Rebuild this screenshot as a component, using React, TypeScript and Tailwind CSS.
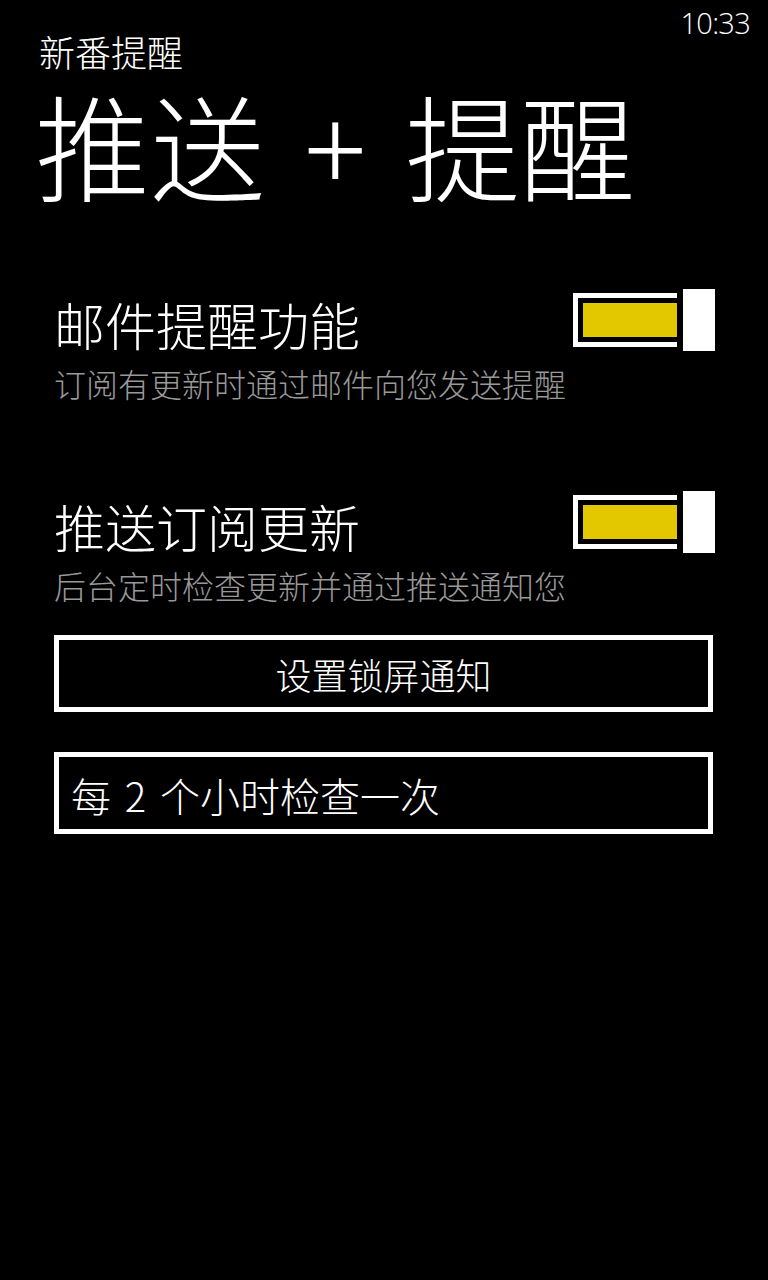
const cjk = "font-['Noto_Sans_CJK_SC','Noto_Sans',sans-serif]"

function Toggle() {
  return (
    <div className="relative w-[148px] h-[62px] -mr-[8px] shrink-0">
      <div className="mt-[4px] w-[142px] h-[54px] border-[5px] border-white p-[5px]">
        <div className="h-full bg-[#e3c800]" />
      </div>
      <div className="absolute right-0 top-0 h-[62px] w-[44px] border-x-[6px] border-black bg-white" />
    </div>
  )
}

function SettingRow({ title, desc }: { title: string; desc: string }) {
  return (
    <div className="flex items-start justify-between">
      <div className="mt-[10px] flex flex-col">
        <div className="text-[51px] leading-none text-white font-light">{title}</div>
        <div className="mt-[17px] text-[32px] leading-none text-[#999999] font-light">{desc}</div>
      </div>
      <Toggle />
    </div>
  )
}

export default function App() {
  return (
    <div className={`w-[768px] h-[1280px] bg-black text-white overflow-hidden ${cjk}`}>
      <div className="h-[33px] flex justify-end pr-[18px] pt-[8px]">
        <span className="font-['Open_Sans',sans-serif] text-[29px] leading-none font-light tracking-tight">
          10:33
        </span>
      </div>

      <div className="pl-[39px]">
        <div className="text-[36px] leading-none font-light">新番提醒</div>
        <div className="mt-[17px] -ml-[4px] text-[115px] leading-none font-light whitespace-pre [word-spacing:14px]">
          推送 + 提醒
        </div>
      </div>

      <div className="pl-[54px] pr-[55px] mt-[88px]">
        <SettingRow title="邮件提醒功能" desc="订阅有更新时通过邮件向您发送提醒" />
        <div className="mt-[92px]">
          <SettingRow title="推送订阅更新" desc="后台定时检查更新并通过推送通知您" />
        </div>

        <button className="mt-[34px] w-full h-[77px] border-[5px] border-white flex items-center justify-center text-[36px] leading-none font-light">
          设置锁屏通知
        </button>

        <div className="mt-[40px] w-full h-[82px] border-[5px] border-white flex items-center pl-[12px] pt-[4px] text-[40px] leading-none font-light [word-spacing:5px]">
          每 2 个小时检查一次
        </div>
      </div>
    </div>
  )
}
